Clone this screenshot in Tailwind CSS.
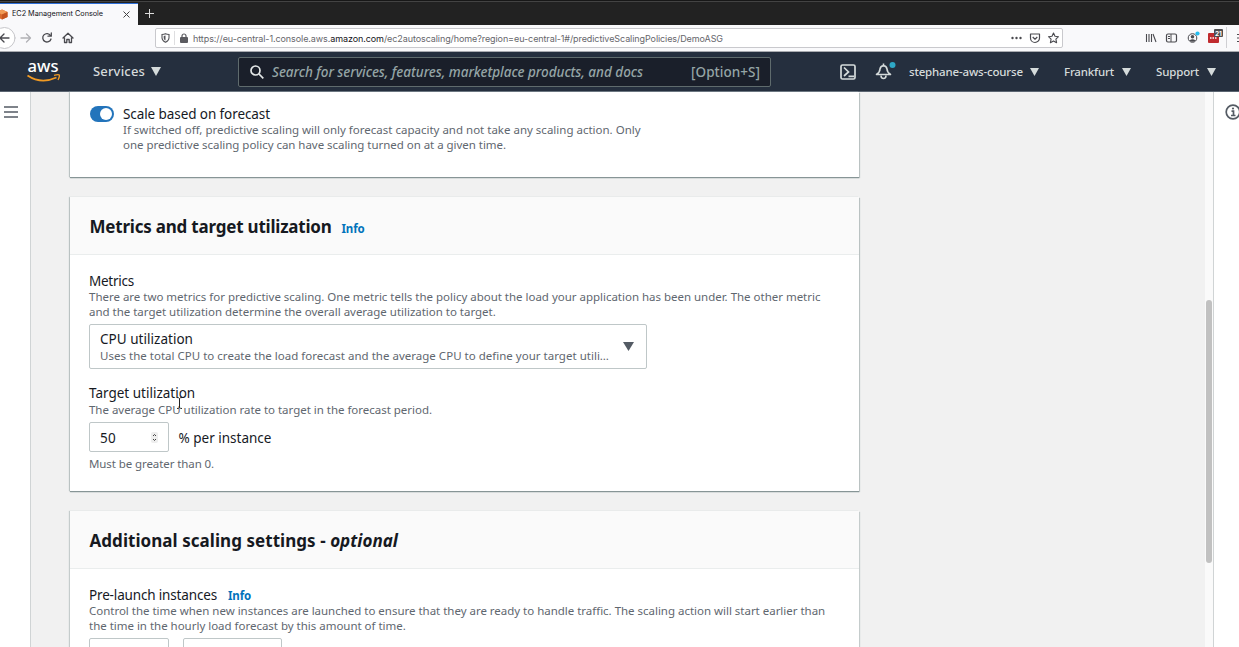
<!DOCTYPE html>
<html lang="en">
<head>
<meta charset="utf-8">
<title>EC2 Management Console</title>
<script src="https://cdn.jsdelivr.net/npm/@tailwindcss/browser@4"></script>
</head>
<body class="w-[1239px] h-[647px] overflow-hidden flex flex-col bg-white font-['Noto_Sans','Open_Sans',sans-serif] text-[#16191f] whitespace-nowrap">
<!-- Tab strip -->
<div class="h-[25px] shrink-0 bg-[#222222] border-t border-[#171717] flex font-['Inter',sans-serif]">
  <div class="w-full flex border-t border-[#434343] pt-px">
    <div class="w-[138px] bg-[#f9f9fb] border-t border-[#2e6fd8] flex items-center">
      <svg class="w-2 h-[11px] shrink-0" viewBox="0 0 8 11"><path d="M-3 3 2 .5 7.500 3 7.500 8 2 10.500-3 8z" fill="#d8692c"/><path d="M-3 3 2 .5 7.500 3 2 5.500z" fill="#f09a55"/><path d="M2 5.500 7.500 3v5L2 10.500z" fill="#c4541f"/></svg>
      <span class="ml-[4px] text-[7.3px] tracking-[-0.03px] text-[#15141a]">EC2 Management Console</span>
      <svg class="ml-auto mr-2 w-[7px] h-[7px]" viewBox="0 0 7 7" stroke="#444" fill="none"><path d="M.5.5l6 6M6.500.5l-6 6"/></svg>
    </div>
    <svg class="ml-[7px] mt-[6px] w-[9px] h-[9px]" viewBox="0 0 9 9" stroke="#ddd" fill="none"><path d="M4.500 0v9M0 4.500h9"/></svg>
  </div>
</div>
<!-- Browser toolbar -->
<div class="h-[27px] shrink-0 bg-[#f9f9fb] border-b border-[#a9abb0] flex items-center font-['Inter',sans-serif]">
  <div class="w-[155px] h-full flex items-center">
    <svg class="w-[80px] h-[26px]" viewBox="0 0 80 26" fill="none" stroke="#4a4a4f" stroke-width="1.300" stroke-linecap="round" stroke-linejoin="round">
      <circle cx="4.500" cy="13" r="10.500" fill="#fff" stroke="#c6c6ca" stroke-width="1"/>
      <path d="M9 13H0M4 9 0 13l4 4"/><path stroke="#b1b1b5" d="M21 13h9M26.500 9l4 4-4 4"/>
      <path d="M50.500 10.500A4.200 4.200 0 1 0 51 14M51.300 8v3.200H48"/>
      <path d="M63 13l5-4.700L73 13M64.500 12.500v5h2.300v-3h2.400v3h2.300v-5"/>
    </svg>
  </div>
  <div class="w-[908px] h-[20px] bg-white border border-[#c9c9cd] rounded-[2px] flex items-center">
    <svg class="ml-[5px] w-[9px] h-[10px]" viewBox="0 0 9 10" fill="none" stroke="#55555a" stroke-width="1.100"><path d="M1 1.500Q3 1.300 4.500.7 6 1.300 8 1.500V5Q7.700 8 4.500 9.300 1.300 8 1 5z"/><path d="M4.500 2.500V7.500Q2.700 6.500 2.700 5V3z" fill="#55555a" stroke="none"/></svg>
    <div class="ml-[4px] w-px h-[14px] bg-[#dedee0]"></div>
    <svg class="ml-[5px] w-[8px] h-[10px]" viewBox="0 0 8 10"><rect y="4" width="8" height="6" rx="1" fill="#5b5b60"/><path d="M2 4.500V3a2 2 0 0 1 4 0v1.500" fill="none" stroke="#5b5b60" stroke-width="1.200"/></svg>
    <span class="ml-[5px] mt-px text-[9px] tracking-[-0.088px] text-[#66666b]">https://eu-central-1.console.aws.<span class="text-[#15141a]">amazon.com</span>/ec2autoscaling/home?region=eu-central-1#/predictiveScalingPolicies/DemoASG</span>
    <svg class="ml-auto mr-[2px] w-[50px] h-[12px]" viewBox="0 0 50 12" fill="none" stroke="#4a4a4f" stroke-linejoin="round"><g fill="#4a4a4f" stroke="none"><circle cx="2.500" cy="6" r="1.200"/><circle cx="6.500" cy="6" r="1.200"/><circle cx="10.500" cy="6" r="1.200"/></g><path d="M20.500 2h9v4a4.500 4.500 0 0 1-9 0z" stroke-width="1.200"/><path d="M22.700 5 25 7.200 27.300 5" stroke-width="1.200"/><path d="M43.500 1l1.500 3.300 3.500.4-2.600 2.400.7 3.600-3.100-1.800-3.100 1.800.7-3.600L38.500 4.700l3.500-.4z" stroke-width="1.100"/></svg>
  </div>
  <svg class="ml-auto w-[96px] h-[26px]" viewBox="1143 25 96 26" fill="none" stroke="#4a4a4f">
    <path d="M1146.500 34v8M1149 34v8M1151.500 34v8M1153 34l3 8" stroke-width="1.100"/>
    <rect x="1166.500" y="34" width="10" height="8" rx="1.500" stroke-width="1.200"/><path d="M1171 34v8M1168 36.500h2M1168 38.500h2" stroke-width="1"/>
    <circle cx="1192.500" cy="38" r="4.300" stroke-width="1"/><circle cx="1192.500" cy="36.800" r="1.800" fill="#4a4a4f" stroke="none"/><path d="M1189.500 40.500q3-2.500 6 0-3 2.500-6 0z" fill="#4a4a4f" stroke="none"/><circle cx="1197.500" cy="33.500" r="2.100" fill="#23bdf0" stroke="none"/>
    <rect x="1208" y="33" width="11" height="10" rx="1" fill="#c02b2f" stroke="none"/><path d="M1210 38h7" stroke="#fff" stroke-width="1.500" stroke-dasharray="1.500 1"/>
    <rect x="1214" y="29" width="9" height="8" rx="1" fill="#4e4e50" stroke="none"/><text x="1215" y="35.700" font-size="6.500" font-weight="bold" fill="#fff" stroke="none" font-family="Inter">21</text>
    <path d="M1226.500 27v21" stroke="#cfcfd3"/><path d="M1237 34.500h5M1237 38h5M1237 41.500h5" stroke-width="1.200"/>
  </svg>
</div>
<!-- AWS navigation -->
<header class="h-[40px] shrink-0 bg-[#252f3e] border-b border-[#5b6571] flex items-center text-[#d5dbdb]">
  <svg class="ml-[26px] w-[36px] h-[24px] shrink-0 overflow-visible" viewBox="0 0 36 24"><text x="1.500" y="12" font-size="17" font-weight="500" fill="#fff" textLength="31" lengthAdjust="spacingAndGlyphs" font-family="Noto Sans">aws</text><path d="M1.500 15.500Q15 24.500 30.500 17.500" stroke="#f09a23" stroke-width="1.800" fill="none"/><path d="M28 15.300q4.500-1.200 5.300-.3.600 1.200-1.300 5" stroke="#f09a23" stroke-width="1.300" fill="none"/></svg>
  <span class="ml-[31px] mt-px w-[52px] text-[13px] tracking-[0.17px] font-medium">Services</span>
  <svg class="ml-[6px] w-[10px] h-[9px]" viewBox="0 0 10 9" fill="#d5dbdb"><path d="M0 0h10L5 9z"/></svg>
  <div class="ml-[77px] w-[533px] h-[30px] bg-[#1a1f2a] border border-[#5f6b6d] rounded-[2px] flex items-center text-[#95a5a6]">
    <svg class="ml-[11px] w-[14px] h-[14px]" viewBox="0 0 14 14" fill="none" stroke="#e4e8e8" stroke-width="1.700"><circle cx="5.500" cy="5.500" r="4.500"/><path d="M9 9l4.300 4.300"/></svg>
    <span class="ml-[8px] mt-px w-[419px] text-[13.5px] italic font-medium tracking-[-0.032px]">Search for services, features, marketplace products, and docs</span>
    <span class="mt-px text-[13.5px] font-medium tracking-[0.045px]">[Option+S]</span>
  </div>
  <svg class="ml-[69px] w-[16px] h-[16px]" viewBox="0 0 16 16" fill="none" stroke="#d5dbdb" stroke-width="1.700"><rect x="1" y="1" width="14" height="14" rx="1.500"/><path d="M4 3.500 8.500 8 4 12M8.500 12.300H14"/></svg>
  <svg class="ml-[19px] -mt-[2px] w-[21px] h-[19px]" viewBox="0 0 21 19" fill="none" stroke="#d5dbdb" stroke-width="1.600"><path d="M1.500 13.500Q5 11 5 8 5.500 5 8.500 4.800 11.500 5 12 8q0 3 3.500 5.500z" stroke-linejoin="round"/><path d="M8.500 2.500V5M6 14.500q0 3 2.500 3t2.500-3"/><circle cx="17.500" cy="4" r="3" fill="#2ea8c6" stroke="none"/></svg>
  <span class="ml-[13px] mt-px w-[114px] text-[11.5px] tracking-[-0.17px] font-medium">stephane-aws-course</span>
  <svg class="ml-[7px] w-[9px] h-[8px]" viewBox="0 0 9 8" fill="#d5dbdb"><path d="M0 0h9L4.500 8z"/></svg>
  <span class="ml-[25px] mt-px w-[50px] text-[11.5px] tracking-[-0.17px] font-medium">Frankfurt</span>
  <svg class="ml-[8px] w-[9px] h-[8px]" viewBox="0 0 9 8" fill="#d5dbdb"><path d="M0 0h9L4.500 8z"/></svg>
  <span class="ml-[25px] mt-px w-[43px] text-[11.5px] tracking-[-0.16px] font-medium">Support</span>
  <svg class="ml-[8px] w-[9px] h-[8px]" viewBox="0 0 9 8" fill="#d5dbdb"><path d="M0 0h9L4.500 8z"/></svg>
</header>
<!-- Page -->
<div class="flex h-[555px]">
  <aside class="w-[31px] shrink-0 border-r border-[#d0d4d5] pt-[14px] pl-[4px]"><svg class="w-[14px] h-[12px]" viewBox="0 0 14 12" stroke="#545b64" stroke-width="1.700"><path d="M0 1h14M0 6h14M0 11h14"/></svg></aside>
  <main class="w-[1174px] shrink-0 bg-[#f1f1f1] pl-[39px]">
    <section class="w-[789px] h-[85px] bg-white shadow-[0_1px_1px_#879596,1px_1px_1px_#c5cccc,-1px_0_1px_#c5cccc] flex pl-[19.5px] pt-[14px]">
      <div class="w-[24px] h-[16px] rounded-full bg-[#2374bb] flex justify-end p-[2px]"><div class="size-[12px] rounded-full bg-white"></div></div>
      <div class="ml-[9.5px]">
        <div class="text-[13.5px] leading-[17px] tracking-[-0.087px]">Scale based on forecast</div>
        <div class="-mt-px text-[11.5px] leading-[15px] text-[#5f676f]">If switched off, predictive scaling will only forecast capacity and not take any scaling action. Only<br><span class="tracking-[-0.037px]">one predictive scaling policy can have scaling turned on at a given time.</span></div>
      </div>
    </section>
    <section class="mt-[20px] w-[789px] h-[294px] bg-white shadow-[0_1px_1px_#879596,1px_1px_1px_#c5cccc,-1px_0_1px_#c5cccc]">
      <div class="h-[58px] bg-[#fafafa] border-b border-[#eaeded] px-[19.5px] flex items-center gap-[10px]">
        <h2 class="w-[242px] text-[17px] font-bold leading-[22px] mt-[2px] tracking-[-0.21px]">Metrics and target utilization</h2>
        <a class="text-[11.5px] font-bold text-[#0073bb] mt-[7px] tracking-[-0.148px]">Info</a>
      </div>
      <div class="px-[19px] pt-[18px]">
        <div class="text-[13.5px] leading-[17px] tracking-[-0.25px]">Metrics</div>
        <div class="-mt-px text-[11.5px] leading-[15px] text-[#5f676f] tracking-[-0.016px]">There are two metrics for predictive scaling. One metric tells the policy about the load your application has been under. The other metric<br>and the target utilization determine the overall average utilization to target.</div>
        <div class="mt-[5px] w-[558px] h-[45px] border border-[#bfc7c8] rounded-[2px] flex items-center pl-[10px] pr-[12px] justify-between">
          <div class="pt-px">
            <div class="text-[13.5px] leading-[17px] tracking-[0.031px]">CPU utilization</div>
            <div class="text-[11.5px] leading-[16px] text-[#5f676f] tracking-[0.014px]">Uses the total CPU to create the load forecast and the average CPU to define your target utili…</div>
          </div>
          <svg class="w-[11px] h-[9px]" viewBox="0 0 11 9" fill="#545b64"><path d="M0 0h11L5.500 9z"/></svg>
        </div>
        <div class="relative mt-[16px] text-[13.5px] leading-[17px]">Target utilization
          <!-- Text cursor -->
          <svg class="absolute left-[87px] top-[12px] w-[7px] h-[12px]" viewBox="0 0 7 12" fill="none" stroke="#222"><path d="M1 .5q2 0 2.500 1Q4 .5 6 .5M3.500 1.500v9M1 11.500q2 0 2.500-1 .5 1 2.500 1"/></svg>
        </div>
        <div class="text-[11.5px] leading-[16px] text-[#5f676f] tracking-[-0.022px]">The average CPU utilization rate to target in the forecast period.</div>
        <div class="mt-[4px] flex items-center text-[13.5px]">
          <div class="w-[80px] h-[30px] border border-[#bfc7c8] rounded-[2px] pl-[10px] pr-[10px] flex items-center justify-between"><span class="mt-[2px] tracking-[0.4px]">50</span><svg class="w-[7px] h-[11px]" viewBox="0 0 7 11" fill="none" stroke="#444"><rect x="0" y="0" width="7" height="11" rx="2" fill="#eee" stroke="none"/><path d="M2 4l1.500-1.500L5 4M2 7l1.500 1.500L5 7"/></svg></div>
          <span class="ml-[9.5px] mt-[2px]">% per instance</span>
        </div>
        <div class="mt-[4px] text-[11.5px] leading-[15px] text-[#5f676f] tracking-[-0.09px]">Must be greater than 0.</div>
      </div>
    </section>
    <section class="mt-[20px] w-[789px] h-[160px] bg-white shadow-[1px_1px_1px_#c5cccc,-1px_0_1px_#c5cccc]">
      <div class="h-[58px] bg-[#fafafa] border-b border-[#eaeded] px-[19.5px] flex items-center">
        <h2 class="text-[17px] font-bold leading-[22px] mt-[2px] tracking-[0.05px]">Additional scaling settings - <i>optional</i></h2>
      </div>
      <div class="px-[19px] pt-[18px]">
        <div class="text-[13.5px] leading-[17px] flex items-center gap-[10px] tracking-[-0.158px]"><span class="w-[129px]">Pre-launch instances</span><a class="text-[11.5px] font-bold text-[#0073bb]">Info</a></div>
        <div class="-mt-px text-[11.5px] leading-[15px] text-[#5f676f] tracking-[-0.018px]">Control the time when new instances are launched to ensure that they are ready to handle traffic. The scaling action will start earlier than<br>the time in the hourly load forecast by this amount of time.</div>
        <div class="mt-[5px] flex gap-[14px]"><div class="w-[80px] h-[30px] border border-[#bfc7c8] rounded-[2px]"></div><div class="w-[99px] h-[30px] border border-[#bfc7c8] rounded-[2px]"></div></div>
      </div>
    </section>
  </main>
  <div class="w-[8px] shrink-0 bg-[#fafafa] pt-[208px] pl-px"><div class="w-[6px] h-[263px] rounded-full bg-[#c1c1c1]"></div></div>
  <aside class="w-[26px] shrink-0 border-l border-[#d0d4d5] pt-[12px] pl-[11px] overflow-hidden"><svg class="w-[16px] h-[16px] max-w-none" viewBox="0 0 16 16" fill="none" stroke="#545b64"><circle cx="8" cy="8" r="6.800" stroke-width="1.700"/><path d="M6.500 7.200H8.500V11.500M6 11.500h4.500" stroke-width="1.700"/><circle cx="8" cy="4.500" r="1.100" fill="#545b64" stroke="none"/></svg></aside>
</div>
</body>
</html>
